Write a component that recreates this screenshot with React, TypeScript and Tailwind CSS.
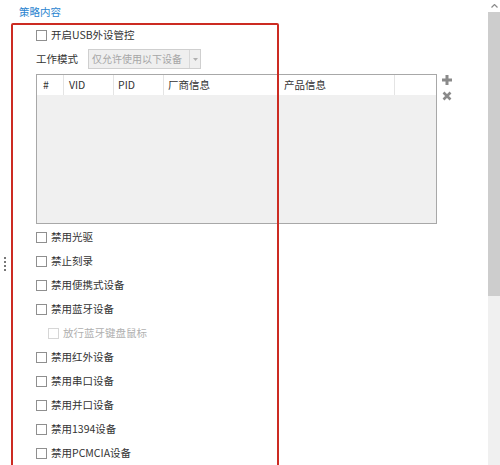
import React from "react";

const Box = ({ disabled = false }: { disabled?: boolean }) => (
  <span
    className={`inline-block w-[11px] h-[11px] border bg-white shrink-0 ${
      disabled ? "border-[#d6d6d6]" : "border-[#8f8f8f]"
    }`}
  />
);

const Row = ({ label, disabled = false, indent = false }: { label: string; disabled?: boolean; indent?: boolean }) => (
  <div className={`h-[24px] flex items-center gap-[4px] ${indent ? "pl-[12px]" : ""}`}>
    <Box disabled={disabled} />
    <span className={`whitespace-nowrap ${disabled ? "text-[#b0b0b0]" : "text-[#333]"}`}>{label}</span>
  </div>
);

export default function App() {
  const items: { label: string; disabled?: boolean; indent?: boolean }[] = [
    { label: "禁用光驱" },
    { label: "禁止刻录" },
    { label: "禁用便携式设备" },
    { label: "禁用蓝牙设备" },
    { label: "放行蓝牙键盘鼠标", disabled: true, indent: true },
    { label: "禁用红外设备" },
    { label: "禁用串口设备" },
    { label: "禁用并口设备" },
    { label: "禁用1394设备" },
    { label: "禁用PCMCIA设备" },
  ];
  return (
    <div
      className="w-[500px] h-[465px] relative overflow-hidden bg-white flex text-[10.5px] text-[#333] leading-none"
      style={{ fontFamily: '"Noto Sans CJK SC", "Noto Sans", sans-serif' }}
    >
      {/* splitter grip */}
      <div className="w-[8px] flex flex-col items-center pt-[257px]">
        <div className="flex flex-col gap-[2px] pl-[2px]">
          <span className="w-[2px] h-[2px] bg-[#777]" />
          <span className="w-[2px] h-[2px] bg-[#777]" />
          <span className="w-[2px] h-[2px] bg-[#777]" />
          <span className="w-[2px] h-[2px] bg-[#777]" />
        </div>
      </div>

      {/* main */}
      <div className="flex-1 flex flex-col">
        <div className="h-[28px] pl-[11px] flex items-center">
          <span className="text-[#2b85d0]">策略内容</span>
        </div>
        <div className="pl-[28px] flex flex-col">
          <div className="h-[20px] flex items-center gap-[4px]">
            <Box />
            <span>开启USB外设管控</span>
          </div>
          <div className="mt-[4px] h-[20px] flex items-center">
            <span className="w-[52px] whitespace-nowrap">工作模式</span>
            <div className="w-[113px] h-[20px] border border-[#cfcfcf] bg-[#efefef] flex items-center">
              <span className="flex-1 pl-[3px] text-[10px] text-[#a6a6a6] whitespace-nowrap">
                仅允许使用以下设备
              </span>
              <span className="w-[11px] h-full border-l border-[#d8d8d8] flex items-center justify-center shrink-0">
                <svg width="5" height="3" viewBox="0 0 5 3">
                  <path d="M0 0 L5 0 L2.5 3 Z" fill="#b0b0b0" />
                </svg>
              </span>
            </div>
          </div>
          <div className="mt-[5px] flex items-start gap-[4px]">
            <div className="w-[401px] h-[150px] border border-[#a8a8a8] bg-[#f0f0f0] flex flex-col">
              <div className="h-[20px] bg-white flex items-center text-[#333]">
                <span className="w-[27px] pl-[6px] h-full flex items-center border-r border-[#e4e4e4]">#</span>
                <span className="w-[50px] pl-[5px] h-full flex items-center border-r border-[#e4e4e4]">VID</span>
                <span className="w-[50px] pl-[4px] h-full flex items-center border-r border-[#e4e4e4]">PID</span>
                <span className="w-[115px] pl-[4px] h-full flex items-center border-r border-[#e4e4e4]">厂商信息</span>
                <span className="w-[116px] pl-[5px] h-full flex items-center border-r border-[#e4e4e4]">产品信息</span>
                <span className="flex-1" />
              </div>
            </div>
            <div className="flex flex-col items-center gap-[5px] pt-[0px]">
              <svg width="12" height="12" viewBox="0 0 12 12">
                <path d="M6 1 V11 M1 6 H11" stroke="#8a8a8a" strokeWidth="3" />
              </svg>
              <svg width="10" height="10" viewBox="0 0 10 10">
                <path d="M1.5 1.5 L8.5 8.5 M8.5 1.5 L1.5 8.5" stroke="#8a8a8a" strokeWidth="2.6" />
              </svg>
            </div>
          </div>
          <div className="mt-[1px] flex flex-col">
            {items.map((it) => (
              <Row key={it.label} label={it.label} disabled={it.disabled} indent={it.indent} />
            ))}
          </div>
        </div>
      </div>

      {/* scrollbar */}
      <div className="w-[12px] bg-[#f0f0f0] flex flex-col">
        <div className="h-[12px] bg-white flex items-center justify-center">
          <svg width="7" height="4" viewBox="0 0 7 4">
            <path d="M0.5 3.5 L3.5 0.5 L6.5 3.5" stroke="#8a8a8a" strokeWidth="1.2" fill="none" />
          </svg>
        </div>
        <div className="h-[284px] bg-[#cdcdcd]" />
      </div>

      {/* red annotation box */}
      <div className="absolute left-[11px] top-[23px] w-[268px] h-[460px] border-[2px] border-[#cc2b22] rounded-[2px]" />
    </div>
  );
}
